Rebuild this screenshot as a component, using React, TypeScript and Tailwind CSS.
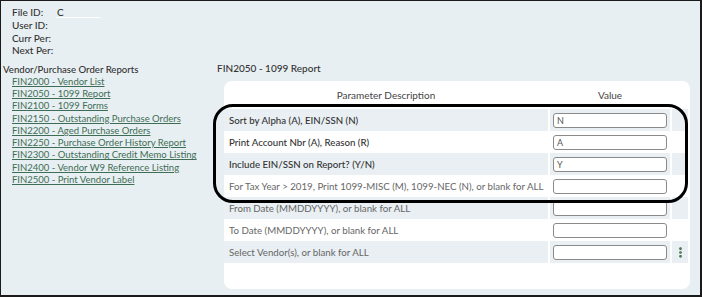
import { MoreVertical } from "lucide-react";

const INFO = [
  { label: "File ID:", value: "C" },
  { label: "User ID:", value: "" },
  { label: "Curr Per:", value: "" },
  { label: "Next Per:", value: "" },
];

const REPORTS = [
  "FIN2000 - Vendor List",
  "FIN2050 - 1099 Report",
  "FIN2100 - 1099 Forms",
  "FIN2150 - Outstanding Purchase Orders",
  "FIN2200 - Aged Purchase Orders",
  "FIN2250 - Purchase Order History Report",
  "FIN2300 - Outstanding Credit Memo Listing",
  "FIN2400 - Vendor W9 Reference Listing",
  "FIN2500 - Print Vendor Label",
];

const PARAMS = [
  { desc: "Sort by Alpha (A), EIN/SSN (N)", value: "N", strong: true },
  { desc: "Print Account Nbr (A), Reason (R)", value: "A", strong: true },
  { desc: "Include EIN/SSN on Report? (Y/N)", value: "Y", strong: true },
  { desc: "For Tax Year > 2019, Print 1099-MISC (M), 1099-NEC (N), or blank for ALL", value: "" },
  { desc: "From Date (MMDDYYYY), or blank for ALL", value: "" },
  { desc: "To Date (MMDDYYYY), or blank for ALL", value: "" },
  { desc: "Select Vendor(s), or blank for ALL", value: "", menu: true },
];

export default function App() {
  return (
    <div
      className="relative w-[702px] h-[297px] overflow-hidden bg-[#e8eff2] border-l border-t border-r-2 border-b-2 border-[#1a1a1a] text-[#333] flex"
      style={{ fontFamily: "Lato, 'Open Sans', sans-serif" }}
    >
      {/* left side */}
      <div className="w-[215px] shrink-0 pt-[5px]">
        <div className="pl-[11px] flex flex-col">
          {INFO.map((row) => (
            <div key={row.label} className="flex items-center h-[12.7px] text-[10px] leading-none font-medium">
              <span className="w-[44px]">{row.label}</span>
              {row.value && (
                <span className="w-[44px] pl-[1px] border-b border-white">{row.value}</span>
              )}
            </div>
          ))}
        </div>
        <div className="mt-[7px] pl-[2px] text-[9.6px] leading-[12px] font-medium">
          Vendor/Purchase Order Reports
        </div>
        <div className="pl-[11px] flex flex-col">
          {REPORTS.map((r) => (
            <a key={r} className="text-[9.5px] leading-[12.25px] text-[#3e6d55] underline">
              {r}
            </a>
          ))}
        </div>
      </div>

      {/* right side */}
      <div className="flex flex-col pt-[61px] pl-[1px]">
        <div className="text-[10px] leading-[12px] font-medium">FIN2050 - 1099 Report</div>
        <div className="mt-[7px] ml-[7px] w-[466px] h-[208px] bg-white rounded-[8px] pr-[2px]">
          <div className="grid grid-cols-[324px_120px_16px] gap-x-[2px]">
            <div className="h-[28px] flex items-center justify-center text-[10px] text-[#444] pt-[1px]">
              Parameter Description
            </div>
            <div className="h-[28px] flex items-center justify-center text-[10px] text-[#444] pt-[1px]">
              Value
            </div>
            <div />
            {PARAMS.map((p, i) => {
              const bg = i % 2 === 0 ? "bg-[#e9eff2]" : "bg-white";
              return (
                <div key={p.desc} className="contents">
                  <div
                    className={`h-[22px] flex items-center pl-[5px] text-[9.7px] whitespace-nowrap ${bg} ${
                      p.strong ? "text-[#333] font-medium" : "text-[#666]"
                    }`}
                  >
                    {p.desc}
                  </div>
                  <div className={`h-[22px] flex items-center justify-center ${bg}`}>
                    <div className="w-[114px] h-[15px] rounded-[3px] border border-[#8a8a8a] bg-white text-[9px] text-[#555] leading-none flex items-center pl-[3px]">
                      {p.value}
                    </div>
                  </div>
                  <div className={`h-[22px] flex items-center justify-center ${bg}`}>
                    {p.menu && <MoreVertical size={13} strokeWidth={3} className="text-[#2f6b3f]" />}
                  </div>
                </div>
              );
            })}
          </div>
        </div>
      </div>

      {/* highlight annotation */}
      <div className="absolute left-[212px] top-[103px] w-[475px] h-[99px] rounded-[20px] border-[3px] border-black pointer-events-none" />
    </div>
  );
}
